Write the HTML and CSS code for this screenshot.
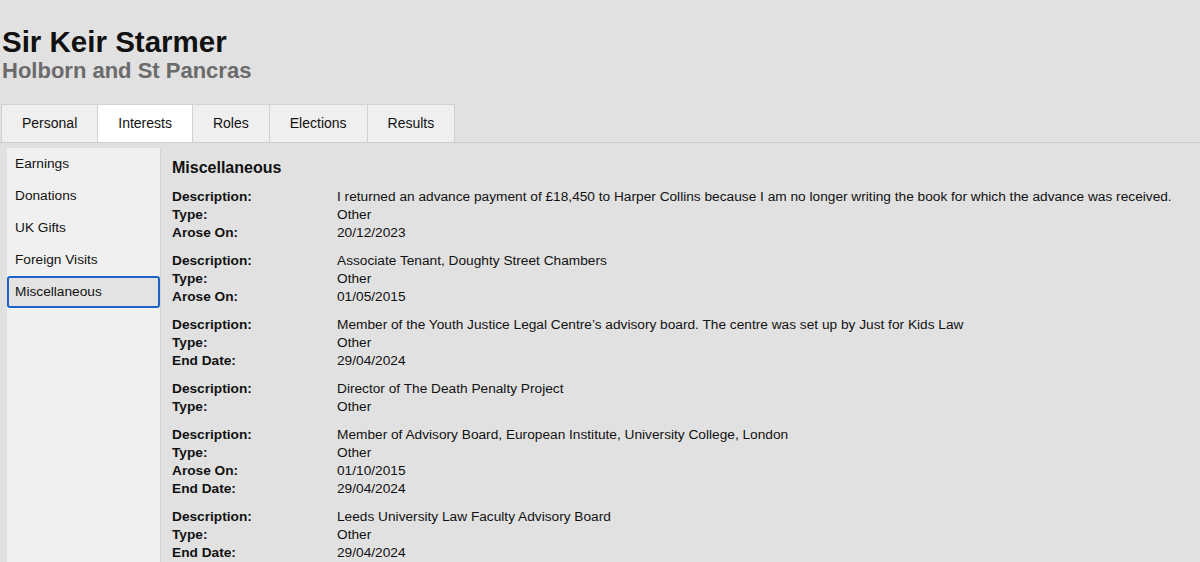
FILE: index.html
```html
<!DOCTYPE html>
<html lang="en">
<head>
<meta charset="utf-8">
<title>Sir Keir Starmer</title>
<link rel="stylesheet" href="styles.css">
</head>
<body>
<header class="header">
  <h1 class="name">Sir Keir Starmer</h1>
  <h2 class="seat">Holborn and St Pancras</h2>
</header>
<nav class="tabs">
  <div class="tab">Personal</div>
  <div class="tab active">Interests</div>
  <div class="tab">Roles</div>
  <div class="tab">Elections</div>
  <div class="tab">Results</div>
</nav>
<main class="panel">
  <aside class="side">
    <div class="side-item">Earnings</div>
    <div class="side-item">Donations</div>
    <div class="side-item">UK Gifts</div>
    <div class="side-item">Foreign Visits</div>
    <div class="side-item selected">Miscellaneous</div>
  </aside>
  <section class="content">
    <h3 class="content-title">Miscellaneous</h3>
    <dl class="entry">
      <dt>Description:</dt><dd>I returned an advance payment of £18,450 to Harper Collins because I am no longer writing the book for which the advance was received.</dd>
      <dt>Type:</dt><dd>Other</dd>
      <dt>Arose On:</dt><dd>20/12/2023</dd>
    </dl>
    <dl class="entry">
      <dt>Description:</dt><dd>Associate Tenant, Doughty Street Chambers</dd>
      <dt>Type:</dt><dd>Other</dd>
      <dt>Arose On:</dt><dd>01/05/2015</dd>
    </dl>
    <dl class="entry">
      <dt>Description:</dt><dd>Member of the Youth Justice Legal Centre’s advisory board. The centre was set up by Just for Kids Law</dd>
      <dt>Type:</dt><dd>Other</dd>
      <dt>End Date:</dt><dd>29/04/2024</dd>
    </dl>
    <dl class="entry">
      <dt>Description:</dt><dd>Director of The Death Penalty Project</dd>
      <dt>Type:</dt><dd>Other</dd>
    </dl>
    <dl class="entry">
      <dt>Description:</dt><dd>Member of Advisory Board, European Institute, University College, London</dd>
      <dt>Type:</dt><dd>Other</dd>
      <dt>Arose On:</dt><dd>01/10/2015</dd>
      <dt>End Date:</dt><dd>29/04/2024</dd>
    </dl>
    <dl class="entry">
      <dt>Description:</dt><dd>Leeds University Law Faculty Advisory Board</dd>
      <dt>Type:</dt><dd>Other</dd>
      <dt>End Date:</dt><dd>29/04/2024</dd>
    </dl>
  </section>
</main>
</body>
</html>
```
FILE: styles.css
```css
html, body {
  margin: 0;
  padding: 0;
  background: #e1e1e1;
  color: #111;
  font-family: "Liberation Sans", Arial, sans-serif;
  font-size: 14px;
}
.header {
  padding: 25px 0 0 2px;
  height: 80px;
  box-sizing: border-box;
}
.name {
  margin: 0;
  font-size: 29.5px;
  line-height: 34px;
  font-weight: bold;
  color: #111;
}
.seat {
  margin: 0;
  font-size: 22px;
  line-height: 24px;
  font-weight: bold;
  color: #6b6b6b;
}
.tabs {
  display: flex;
  margin-top: 24px;
  padding-left: 1px;
  border-bottom: 1px solid #cdcdcd;
}
.tab {
  height: 37px;
  line-height: 37px;
  padding: 0 20px;
  background: #efefef;
  border: 1px solid #d2d2d2;
  border-bottom: none;
  color: #111;
  margin-right: -1px;
}
.tab.active {
  background: #ffffff;
}
.panel {
  display: flex;
  align-items: flex-start;
  padding: 5px 0 0 7px;
  font-size: 13.7px;
}
.side {
  width: 153px;
  flex: none;
  background: #f0f0f0;
  border-right: 1px solid #d4d4d4;
  min-height: 420px;
}
.side-item {
  height: 32px;
  line-height: 32px;
  padding-left: 8px;
  box-sizing: border-box;
}
.side-item.selected {
  background: #e3e3e3;
  border: 2px solid #1f64c4;
  border-radius: 3px;
  line-height: 28px;
  padding-left: 6px;
}
.content {
  flex: 1;
  padding: 11px 0 0 11px;
}
.content-title {
  margin: 0 0 11px 0;
  font-size: 16px;
  line-height: 18px;
  font-weight: bold;
}
.entry {
  display: grid;
  grid-template-columns: 165px 1fr;
  margin: 0 0 10px 0;
  line-height: 18px;
}
.entry dt {
  font-weight: bold;
}
.entry dd {
  margin: 0;
}
```
